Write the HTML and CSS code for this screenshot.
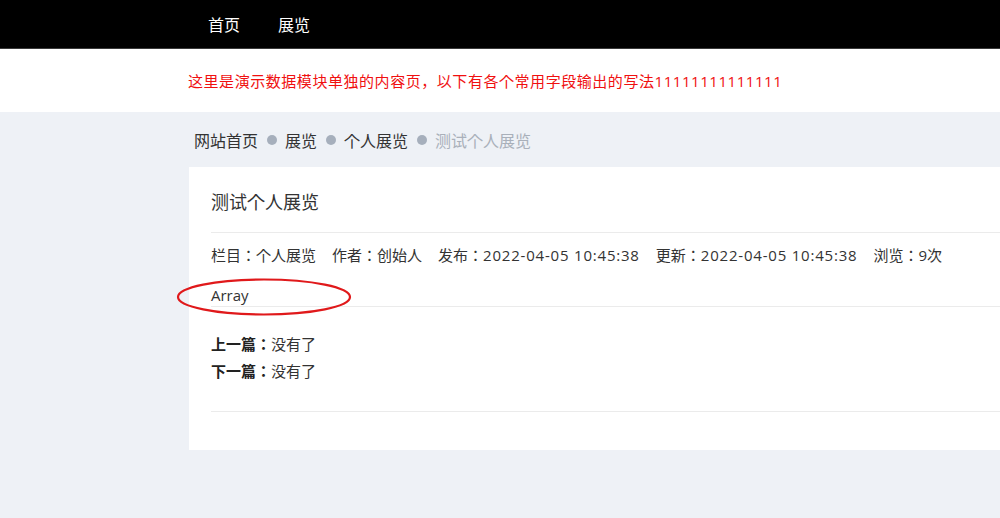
FILE: index.html
```html
<!DOCTYPE html>
<html>

<head>
    <meta charset="UTF-8">
    <meta name="viewport" content="width=device-width, initial-scale=1.0">
    <title>测试个人展览</title>
    <link rel="stylesheet" href="styles.css">
</head>

<body>
    <div class="header">
        <div class="nav">
            <a href="#">首页</a>
            <a href="#">展览</a>
        </div>
    </div>

    <div class="notice">
        <p>这里是演示数据模块单独的内容页，以下有各个常用字段输出的写法11111111111111</p>
    </div>

    <div class="main">
        <div class="crumb">
            <a href="#">网站首页</a>
            <span class="dot"></span>
            <a href="#">展览</a>
            <span class="dot"></span>
            <a href="#">个人展览</a>
            <span class="dot"></span>
            <span class="cur">测试个人展览</span>
        </div>

        <div class="card">
            <h1 class="title">测试个人展览</h1>
            <div class="meta">
                <span>栏目：个人展览</span>
                <span>作者：创始人</span>
                <span>发布：<span class="time">2022-04-05 10:45:38</span></span>
                <span>更新：<span class="time">2022-04-05 10:45:38</span></span>
                <span>浏览：9次</span>
            </div>
            <div class="body">
                Array
                <!-- 标注圈 -->
                <svg class="mark" width="178" height="40" viewBox="0 0 178 40">
                    <ellipse cx="89" cy="20" rx="86" ry="17.5" fill="none" stroke="#e0191b" stroke-width="2.2" />
                </svg>
            </div>
            <div class="pages">
                <p><b>上一篇：</b>没有了</p>
                <p><b>下一篇：</b>没有了</p>
            </div>
        </div>
    </div>
</body>

</html>
```

FILE: styles.css
```css
* {
    margin: 0;
    padding: 0;
    box-sizing: border-box;
}

body {
    background-color: #eef1f6;
    font-family: "Open Sans", "Noto Sans CJK JP", sans-serif;
    font-size: 15px;
    color: #333;
    overflow-x: hidden;
    height: 518px;
}

a {
    text-decoration: none;
    color: inherit;
}

.header {
    background-color: #000;
    height: 49px;
    border-bottom: 1px solid #3a3a3a;
}

.nav {
    display: flex;
    gap: 38px;
    padding-left: 208px;
    line-height: 50px;
}

.nav a {
    color: #fff;
    font-size: 16px;
}

.notice {
    background-color: #fff;
    height: 63px;
    padding-left: 188px;
    padding-top: 20px;
}

.notice p {
    color: #f01010;
    font-size: 15px;
    letter-spacing: 0.55px;
    line-height: 24px;
}

.main {
    padding-left: 189px;
}

.crumb {
    display: flex;
    align-items: center;
    gap: 8.5px;
    height: 55px;
    padding-left: 5px;
    padding-top: 1px;
    font-size: 16px;
    color: #333;
}

.dot {
    width: 10px;
    height: 10px;
    border-radius: 50%;
    background-color: #a6afbc;
}

.cur {
    color: #a9b0ba;
}

.card {
    background-color: #fff;
    width: 1100px;
    height: 283px;
    padding-left: 22px;
}

.title {
    font-size: 18px;
    font-weight: normal;
    line-height: 24px;
    padding-top: 23px;
    padding-bottom: 18px;
    border-bottom: 1px solid #ebebeb;
}

.meta {
    display: flex;
    gap: 16px;
    padding-top: 10px;
    line-height: 24px;
}

.time {
    letter-spacing: 0.8px;
}

.body {
    position: relative;
    padding-top: 17px;
    line-height: 22px;
    border-bottom: 1px solid #ebebeb;
}

.mark {
    position: absolute;
    left: -36px;
    top: 10px;
}

.pages {
    padding-top: 24px;
    padding-bottom: 26px;
    border-bottom: 1px solid #ebebeb;
}

.pages p {
    line-height: 27px;
}

.pages b {
    color: #222;
}
```
